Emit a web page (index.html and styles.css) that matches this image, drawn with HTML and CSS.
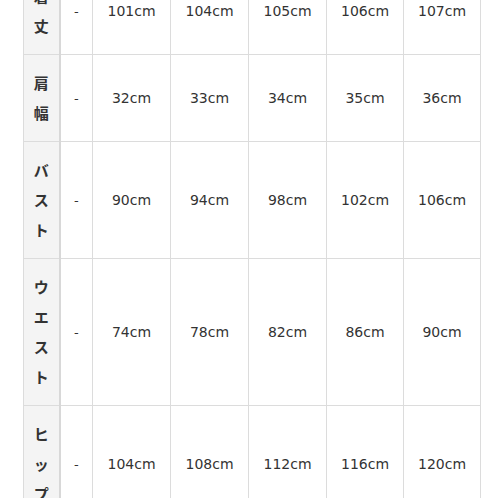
FILE: index.html
```html
<!DOCTYPE html>
<html lang="ja">
<head>
<meta charset="utf-8">
<link rel="stylesheet" href="styles.css">
</head>
<body>
<table class="size-table">
  <colgroup>
    <col class="c-label"><col class="c-dash"><col class="c-val"><col class="c-val"><col class="c-val"><col class="c-val2"><col class="c-val2">
  </colgroup>
  <tbody>
    <tr>
      <th class="label"><span>着</span><span>丈</span></th>
      <td class="dash">-</td>
      <td>101cm</td><td>104cm</td><td>105cm</td><td>106cm</td><td>107cm</td>
    </tr>
    <tr>
      <th class="label"><span>肩</span><span>幅</span></th>
      <td class="dash">-</td>
      <td>32cm</td><td>33cm</td><td>34cm</td><td>35cm</td><td>36cm</td>
    </tr>
    <tr>
      <th class="label"><span>バ</span><span>ス</span><span>ト</span></th>
      <td class="dash">-</td>
      <td>90cm</td><td>94cm</td><td>98cm</td><td>102cm</td><td>106cm</td>
    </tr>
    <tr>
      <th class="label"><span>ウ</span><span>エ</span><span>ス</span><span>ト</span></th>
      <td class="dash">-</td>
      <td>74cm</td><td>78cm</td><td>82cm</td><td>86cm</td><td>90cm</td>
    </tr>
    <tr>
      <th class="label"><span>ヒ</span><span>ッ</span><span>プ</span></th>
      <td class="dash">-</td>
      <td>104cm</td><td>108cm</td><td>112cm</td><td>116cm</td><td>120cm</td>
    </tr>
  </tbody>
</table>
</body>
</html>
```
FILE: styles.css
```css
html, body {
  margin: 0;
  padding: 0;
  background: #ffffff;
}
body {
  overflow: hidden;
  height: 498px;
}
.size-table {
  margin-top: -33px;
  margin-left: 23px;
  border-collapse: collapse;
  table-layout: fixed;
  width: 457px;
  font-family: "DejaVu Sans", "Noto Sans CJK JP", sans-serif;
  font-size: 14px;
  color: #333333;
}
.c-label { width: 36px; }
.c-dash { width: 33px; }
.c-val { width: 78px; }
.c-val2 { width: 77px; }
.size-table th,
.size-table td {
  border: 1px solid #dcdcdc;
  text-align: center;
  vertical-align: middle;
  padding: 0;
}
.label {
  background: #f4f4f4;
  border-right: 2px solid #d8d8d8 !important;
  padding: 13px 0 !important;
  font-family: "Noto Sans CJK JP", sans-serif;
  font-weight: bold;
  font-size: 15px;
  color: #333333;
}
.label span {
  display: block;
  line-height: 30px;
}
.dash {
  font-size: 13px;
}
```
